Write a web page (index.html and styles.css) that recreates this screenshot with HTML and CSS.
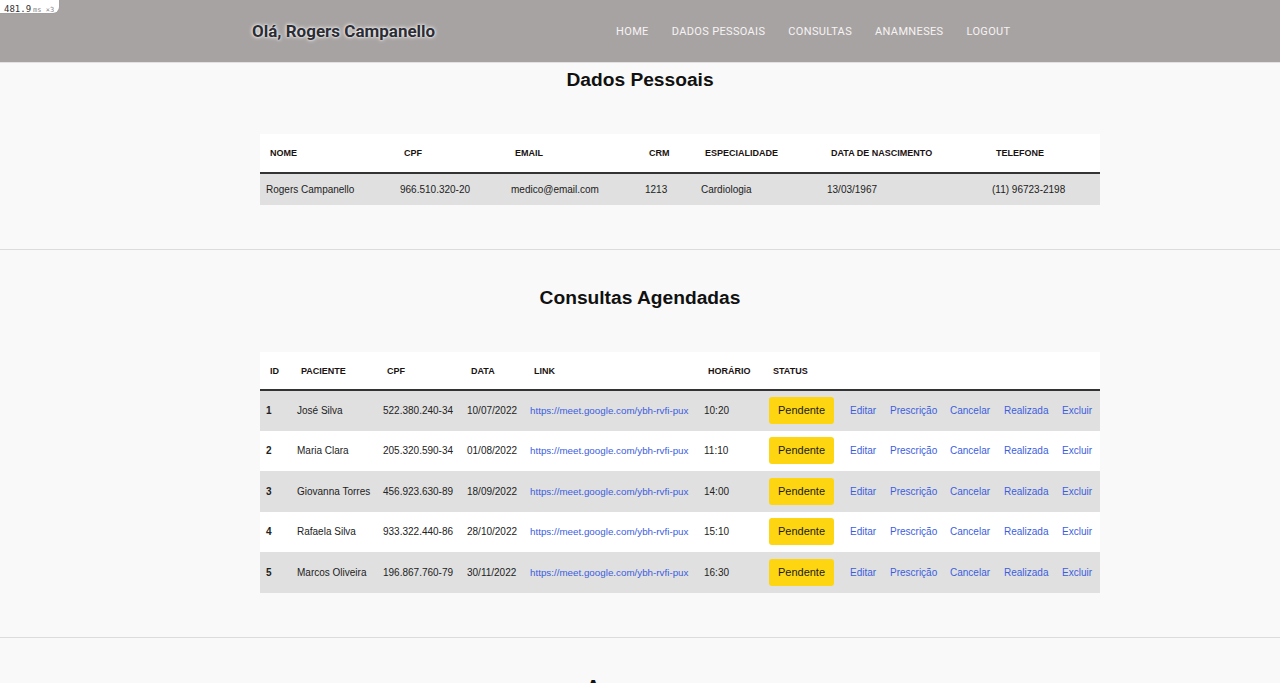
FILE: index.html
```html
<!DOCTYPE html>
<html lang="pt-BR">
<head>
<meta charset="utf-8">
<title>Área do Médico</title>
<link rel="stylesheet" href="styles.css">
</head>
<body>
<div class="perf-badge"><span class="perf-num">481.9</span><span class="perf-unit">ms ×3</span></div>
<header class="topbar">
  <div class="topbar-inner">
    <h1 class="greeting">Olá, Rogers Campanello</h1>
    <nav class="nav">
      <a href="#">Home</a>
      <a href="#">Dados Pessoais</a>
      <a href="#">Consultas</a>
      <a href="#">Anamneses</a>
      <a href="#">Logout</a>
    </nav>
  </div>
</header>

<section class="section section-first">
  <h2 class="section-title">Dados Pessoais</h2>
  <table class="data-table personal">
    <colgroup>
      <col class="w134"><col class="w111"><col class="w134"><col class="w56"><col class="w126"><col class="w165"><col class="w114">
    </colgroup>
    <thead>
      <tr><th>NOME</th><th>CPF</th><th>EMAIL</th><th>CRM</th><th>ESPECIALIDADE</th><th>DATA DE NASCIMENTO</th><th>TELEFONE</th></tr>
    </thead>
    <tbody>
      <tr><td>Rogers Campanello</td><td>966.510.320-20</td><td>medico@email.com</td><td>1213</td><td>Cardiologia</td><td>13/03/1967</td><td>(11) 96723-2198</td></tr>
    </tbody>
  </table>
</section>

<section class="section">
  <h2 class="section-title">Consultas Agendadas</h2>
  <table class="data-table appointments">
    <colgroup>
      <col class="w31"><col class="w86"><col class="w84"><col class="w63"><col class="w174"><col class="w65"><col class="w81"><col class="w40"><col class="w60"><col class="w54"><col class="w58"><col class="w44">
    </colgroup>
    <thead>
      <tr><th>ID</th><th>PACIENTE</th><th>CPF</th><th>DATA</th><th>LINK</th><th>HORÁRIO</th><th>STATUS</th><th></th><th></th><th></th><th></th><th></th></tr>
    </thead>
    <tbody>
      <tr><td class="id">1</td><td>José Silva</td><td>522.380.240-34</td><td>10/07/2022</td><td><a class="link url" href="#">https://meet.google.com/ybh-rvfi-pux</a></td><td>10:20</td><td><span class="status">Pendente</span></td><td><a class="link" href="#">Editar</a></td><td><a class="link" href="#">Prescrição</a></td><td><a class="link" href="#">Cancelar</a></td><td><a class="link" href="#">Realizada</a></td><td><a class="link" href="#">Excluir</a></td></tr>
      <tr><td class="id">2</td><td>Maria Clara</td><td>205.320.590-34</td><td>01/08/2022</td><td><a class="link url" href="#">https://meet.google.com/ybh-rvfi-pux</a></td><td>11:10</td><td><span class="status">Pendente</span></td><td><a class="link" href="#">Editar</a></td><td><a class="link" href="#">Prescrição</a></td><td><a class="link" href="#">Cancelar</a></td><td><a class="link" href="#">Realizada</a></td><td><a class="link" href="#">Excluir</a></td></tr>
      <tr><td class="id">3</td><td>Giovanna Torres</td><td>456.923.630-89</td><td>18/09/2022</td><td><a class="link url" href="#">https://meet.google.com/ybh-rvfi-pux</a></td><td>14:00</td><td><span class="status">Pendente</span></td><td><a class="link" href="#">Editar</a></td><td><a class="link" href="#">Prescrição</a></td><td><a class="link" href="#">Cancelar</a></td><td><a class="link" href="#">Realizada</a></td><td><a class="link" href="#">Excluir</a></td></tr>
      <tr><td class="id">4</td><td>Rafaela Silva</td><td>933.322.440-86</td><td>28/10/2022</td><td><a class="link url" href="#">https://meet.google.com/ybh-rvfi-pux</a></td><td>15:10</td><td><span class="status">Pendente</span></td><td><a class="link" href="#">Editar</a></td><td><a class="link" href="#">Prescrição</a></td><td><a class="link" href="#">Cancelar</a></td><td><a class="link" href="#">Realizada</a></td><td><a class="link" href="#">Excluir</a></td></tr>
      <tr><td class="id">5</td><td>Marcos Oliveira</td><td>196.867.760-79</td><td>30/11/2022</td><td><a class="link url" href="#">https://meet.google.com/ybh-rvfi-pux</a></td><td>16:30</td><td><span class="status">Pendente</span></td><td><a class="link" href="#">Editar</a></td><td><a class="link" href="#">Prescrição</a></td><td><a class="link" href="#">Cancelar</a></td><td><a class="link" href="#">Realizada</a></td><td><a class="link" href="#">Excluir</a></td></tr>
    </tbody>
  </table>
</section>

<section class="section">
  <h2 class="section-title">Anamneses</h2>
</section>
</body>
</html>
```

FILE: styles.css
```css
* { box-sizing: border-box; }

html, body {
  margin: 0;
  padding: 0;
}

body {
  background: #f9f9f9;
  font-family: "Liberation Sans", Arial, sans-serif;
  color: #222;
  overflow: hidden;
}

.perf-badge {
  position: absolute;
  top: 0;
  left: 0;
  z-index: 10;
  background: #fff;
  border-bottom-right-radius: 6px;
  padding: 1px 5px 1px 4px;
  height: 13px;
  font-family: "DejaVu Sans Mono", monospace;
  line-height: 11px;
  white-space: nowrap;
  box-shadow: 0 0 1px rgba(0,0,0,0.2);
}
.perf-num { font-size: 9px; color: #333; }
.perf-unit { font-size: 7px; color: #888; margin-left: 2px; }

.topbar {
  background: #a8a3a3;
  height: 63px;
  border-bottom: 1px solid #e3e1e1;
}

.topbar-inner {
  width: 800px;
  height: 62px;
  margin: 0 auto;
  padding: 0 18px 0 12px;
  display: flex;
  align-items: center;
  justify-content: space-between;
}

.greeting {
  margin: 0;
  font-family: Roboto, "Liberation Sans", sans-serif;
  font-weight: 700;
  font-size: 17px;
  color: #2c2c34;
  text-shadow: 0 0 4px #fff, 0 0 2px #fff;
}

.nav {
  display: flex;
}

.nav a {
  font-family: Roboto, "Liberation Sans", sans-serif;
  font-size: 11px;
  color: #f6f3f3;
  text-decoration: none;
  text-transform: uppercase;
  padding: 0 11.5px;
  letter-spacing: 0.35px;
}

.section {
  border-bottom: 1px solid #dcdcdc;
  padding: 36px 0 44px;
}

.section-first {
  padding-top: 5px;
}

.section:last-child {
  padding-top: 37px;
}

.section-title {
  margin: 0;
  text-align: center;
  font-size: 19.2px;
  line-height: 24px;
  font-weight: 700;
  color: #111;
}

.data-table {
  width: 840px;
  margin: 42px 0 0 260px;
  border-collapse: collapse;
  table-layout: fixed;
  background: #fff;
}

.data-table th {
  text-align: left;
  font-size: 9px;
  font-weight: 700;
  color: #1a1111;
  padding: 0 0 0 10px;
  border-bottom: 2px solid #333;
  white-space: nowrap;
}

.personal th { height: 39px; }
.appointments th { height: 38px; }

.data-table td {
  font-size: 10px;
  color: #222;
  padding: 0 0 0 6px;
  white-space: nowrap;
}

.personal td { height: 32px; }
.appointments td { height: 40.5px; }

.data-table tbody tr:nth-child(odd) { background: #e0e0e0; }
.data-table tbody tr:nth-child(even) { background: #fff; }

.appointments td.id { font-weight: 700; }

.link {
  color: #3b5ee0;
  text-decoration: none;
}

.link.url {
  font-size: 9.8px;
}

.status {
  display: inline-block;
  width: 65px;
  height: 27px;
  line-height: 27px;
  text-align: center;
  background: #fdd611;
  border-radius: 3px;
  font-size: 11px;
  color: #1a1a1a;
}

.w31 { width: 31px; }
.w40 { width: 40px; }
.w44 { width: 44px; }
.w54 { width: 54px; }
.w56 { width: 56px; }
.w58 { width: 58px; }
.w60 { width: 60px; }
.w63 { width: 63px; }
.w65 { width: 65px; }
.w81 { width: 81px; }
.w84 { width: 84px; }
.w86 { width: 86px; }
.w111 { width: 111px; }
.w114 { width: 114px; }
.w126 { width: 126px; }
.w134 { width: 134px; }
.w165 { width: 165px; }
.w174 { width: 174px; }
```
